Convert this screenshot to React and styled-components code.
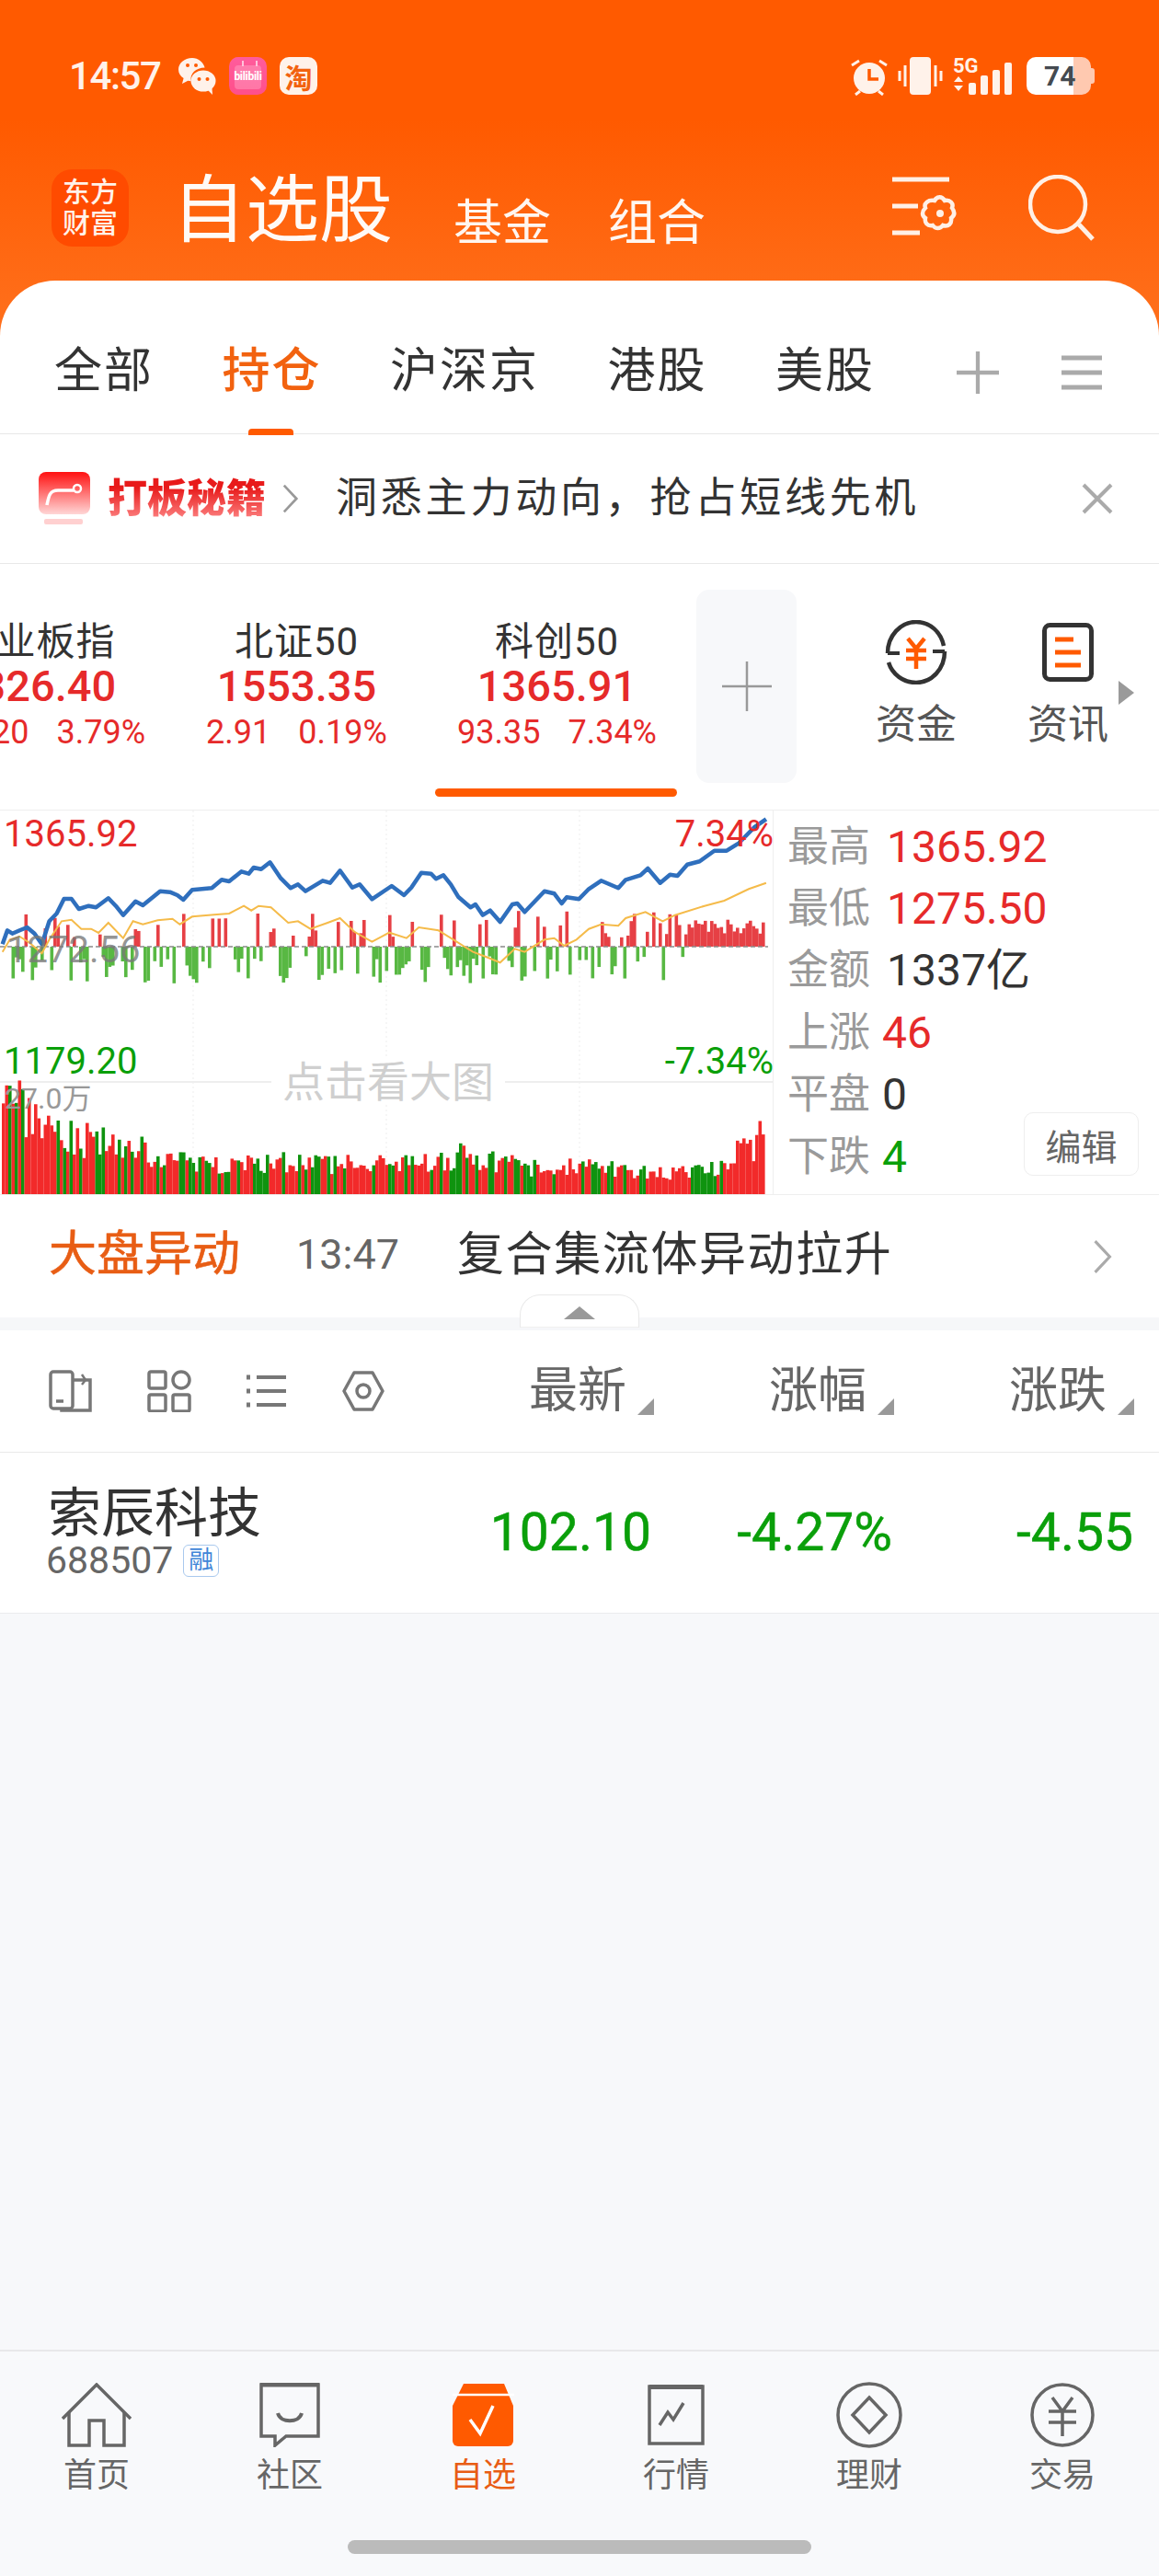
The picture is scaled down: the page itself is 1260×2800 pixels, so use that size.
import React from 'react';
import styled, { createGlobalStyle } from 'styled-components';

const GlobalStyle = createGlobalStyle`
    html, body {
        margin: 0;
        padding: 0;
        background: #f8f9fb;
    }
    body {
        font-family: Roboto, "Noto Sans CJK SC", sans-serif;
    }
    * { box-sizing: border-box; }
`;

const RED = '#e62a2a';
const GREEN = '#0a9f0a';
const ORANGE = '#ff5a00';

const Page = styled.div`
    width: 1260px;
    height: 2800px;
    display: flex;
    flex-direction: column;
    overflow: hidden;
`;

const Header = styled.header`
    background: linear-gradient(180deg, #ff5a00 0, #ff5a00 130px, #ff6e1a 340px);
`;

const StatusBar = styled.div`
    height: 184px;
    padding: 62px 70px 0 75px;
    display: flex;
    align-items: flex-start;
`;

const Clock = styled.span`
    font-size: 42px;
    font-weight: 500;
    letter-spacing: -1.4px;
    line-height: 41px;
    color: #fff2ea;
    width: 117px;
`;

const AppBadge = styled.span`
    position: relative;
    width: 41px;
    height: 41px;
    border-radius: 10px;
    margin-left: 14px;
    display: flex;
    align-items: center;
    justify-content: center;
    font-weight: 700;
    overflow: hidden;
    background: ${p => p.$bg};
    color: ${p => p.$fg};
    font-size: ${p => p.$size}px;
`;

const BiliBadge = styled(AppBadge)`
    letter-spacing: -0.3px;

    &::before {
        content: '';
        position: absolute;
        left: 6px;
        right: 6px;
        top: 9px;
        bottom: 6px;
        border-radius: 4px;
        background: rgba(255, 255, 255, 0.22);
    }
    &::after {
        content: '';
        position: absolute;
        left: 14px;
        top: 4px;
        width: 13px;
        height: 6px;
        border-left: 2px solid #ffc2da;
        border-right: 2px solid #ffc2da;
    }
`;

const StatusRight = styled.div`
    margin-left: auto;
    display: flex;
    align-items: flex-start;
`;

const Battery = styled.span`
    width: 70px;
    height: 41px;
    margin-left: 14px;
    border-radius: 10px;
    font-size: 30px;
    font-weight: 700;
    line-height: 41px;
    color: #444a50;
    padding-left: 19px;
    background: linear-gradient(90deg, #fff 0, #fff 51px, #ffc9b0 51px);
`;

const BatteryCap = styled.span`
    width: 4px;
    height: 17px;
    margin-top: 12px;
    background: #ffc9b0;
    border-radius: 0 3px 3px 0;
`;

const TitleBar = styled.div`
    height: 121px;
    padding: 0 70px 0 56px;
    display: flex;
    align-items: flex-start;
`;

const Logo = styled.div`
    width: 84px;
    height: 84px;
    border-radius: 22px;
    background: #ff4b00;
    color: #fff3ea;
    font-size: 30px;
    font-weight: 500;
    line-height: 34px;
    text-align: center;
    padding-top: 8px;
`;

const MainTitle = styled.h1`
    margin: -5px 0 0 47px;
    font-size: 80px;
    font-weight: 400;
    line-height: 100px;
    color: #fffaf6;
`;

const SubTitle = styled.span`
    margin: 21px 0 0 ${p => p.$gap}px;
    font-size: 53px;
    line-height: 76px;
    color: #fff6f0;
`;

const TitleIcons = styled.div`
    margin-left: auto;
    display: flex;
    align-items: flex-start;
    gap: 76px;
    margin-top: 8px;
`;

const Tabs = styled.nav`
    height: 167px;
    background: #fff;
    border-radius: 60px 60px 0 0;
    border-bottom: 1px solid #e8e8e8;
    padding: 34px 62px 0 59px;
    display: flex;
    align-items: center;
    gap: 74.5px;
`;

const Tab = styled.span`
    position: relative;
    font-size: 52px;
    letter-spacing: 2px;
    line-height: 70px;
    margin-top: -3px;
    color: ${p => (p.$active ? '#f2620f' : '#333')};
    font-weight: ${p => (p.$active ? 500 : 400)};

    &::after {
        content: '';
        display: ${p => (p.$active ? 'block' : 'none')};
        position: absolute;
        left: 28px;
        bottom: -34px;
        width: 49px;
        height: 7px;
        border-radius: 4px 4px 0 0;
        background: ${ORANGE};
    }
`;

const TabTools = styled.div`
    margin-left: auto;
    display: flex;
    gap: 68px;
    align-items: center;
`;

const Banner = styled.div`
    height: 141px;
    background: #fff;
    border-bottom: 1px solid #e8e8e8;
    padding: 0 50px 0 42px;
    display: flex;
    align-items: center;
`;

const PromoName = styled.span`
    margin-left: 19px;
    font-size: 43px;
    font-weight: 900;
    line-height: 60px;
    color: transparent;
    background: linear-gradient(180deg, #e81a1a 30%, #ff8f8f 95%);
    -webkit-background-clip: text;
    background-clip: text;
`;

const PromoText = styled.span`
    margin-left: 40px;
    font-size: 45px;
    letter-spacing: 3.8px;
    line-height: 60px;
    color: #333;
`;

const IndexStrip = styled.section`
    height: 267px;
    background: #fff;
    display: flex;
    overflow: hidden;
`;

const IndexItem = styled.div`
    position: relative;
    flex: 0 0 283px;
    padding-top: 62px;
    text-align: center;
    margin-left: ${p => p.$offset || 0}px;

    &::after {
        content: '';
        display: ${p => (p.$active ? 'block' : 'none')};
        position: absolute;
        left: 9px;
        right: 11px;
        top: 244px;
        height: 9px;
        border-radius: 5px;
        background: ${ORANGE};
    }
`;

const IndexName = styled.div`
    font-size: 42px;
    letter-spacing: 1px;
    line-height: 46px;
    color: #333;
`;

const IndexValue = styled.div`
    font-size: 47px;
    font-weight: 500;
    line-height: 50px;
    color: ${RED};
`;

const IndexChange = styled.div`
    margin-top: 5px;
    display: flex;
    justify-content: center;
    gap: 30px;
    font-size: 36px;
    line-height: 40px;
    color: ${RED};
`;

const AddBox = styled.div`
    flex: 0 0 109px;
    height: 210px;
    margin: 28px 0 0 10px;
    border-radius: 14px;
    background: #f7f8fa;
    display: flex;
    align-items: center;
    justify-content: center;
`;

const Shortcut = styled.div`
    flex: 0 0 ${p => p.$width}px;
    margin-left: ${p => p.$gap}px;
    padding-top: 60px;
    display: flex;
    flex-direction: column;
    align-items: center;
`;

const ShortcutIcon = styled.div`
    height: 71px;
    display: flex;
    align-items: center;
`;

const ShortcutLabel = styled.div`
    margin-top: 19px;
    font-size: 44px;
    line-height: 50px;
    color: #555;
`;

const MoreArrow = styled.div`
    flex: none;
    width: 0;
    height: 0;
    margin: 127px 0 0 9px;
    border-left: 17px solid #9a9a9a;
    border-top: 13px solid transparent;
    border-bottom: 13px solid transparent;
`;

const ChartRow = styled.section`
    height: 419px;
    background: #fff;
    display: flex;
    border-top: 1px solid #eee;
    border-bottom: 1px solid #eee;
`;

const ChartArea = styled.div`
    position: relative;
    width: 841px;
    height: 100%;
    border-right: 1px solid #eee;
`;

const ChartLabel = styled.span`
    position: absolute;
    font-size: ${p => p.$size || 40}px;
    line-height: 44px;
    color: ${p => p.$color};
    top: ${p => p.$top}px;
    left: ${p => (p.$left === undefined ? 'auto' : `${p.$left}px`)};
    right: ${p => (p.$right === undefined ? 'auto' : `${p.$right}px`)};
`;

const BigChartHint = styled.span`
    position: absolute;
    left: 295px;
    top: 270px;
    padding: 0 12px;
    background: #fff;
    font-size: 46px;
    line-height: 50px;
    color: #cfcfcf;
`;

const SidePanel = styled.div`
    position: relative;
    flex: 1;
    padding: 6px 0 0 15px;
`;

const StatRow = styled.div`
    height: 67.4px;
    display: flex;
    align-items: center;
`;

const StatLabel = styled.span`
    width: ${p => (p.$tight ? 103 : 108)}px;
    font-size: 45px;
    color: #9a9a9a;
    line-height: 60px;
`;

const StatValue = styled.span`
    font-size: 48px;
    line-height: 60px;
    color: ${p => p.$color};
`;

const EditButton = styled.button`
    position: absolute;
    right: 22px;
    bottom: 20px;
    width: 125px;
    height: 69px;
    background: #fff;
    border: 1px solid #eee;
    border-radius: 10px;
    font-family: inherit;
    font-size: 39px;
    color: #666;
    padding: 0;
`;

const AlertRow = styled.div`
    height: 133px;
    background: #fff;
    padding: 0 50px 0 53px;
    display: flex;
    align-items: center;
`;

const AlertTag = styled.span`
    width: 269px;
    font-size: 52px;
    line-height: 64px;
    margin-top: -3px;
    color: #e85d14;
    -webkit-text-stroke: 0.6px #e85d14;
`;

const AlertTime = styled.span`
    width: 175px;
    font-size: 45px;
    line-height: 64px;
    margin-top: -3px;
    color: #666;
`;

const AlertText = styled.span`
    font-size: 51px;
    letter-spacing: 1.6px;
    line-height: 64px;
    margin-top: -3px;
    color: #333;
`;

const Divider = styled.div`
    position: relative;
    height: 14px;
    background: #f6f7f9;
`;

const CollapseHandle = styled.div`
    position: absolute;
    left: 565px;
    top: -25px;
    width: 130px;
    height: 36px;
    background: #fff;
    border: 1px solid #e9e9e9;
    border-bottom: 1px solid #f0f0f0;
    border-radius: 22px 22px 0 0;
    display: flex;
    justify-content: center;
    padding-top: 12px;

    &::before {
        content: '';
        width: 0;
        height: 0;
        border-left: 17px solid transparent;
        border-right: 17px solid transparent;
        border-bottom: 14px solid #999;
    }
`;

const ListHead = styled.div`
    height: 133px;
    background: #fff;
    border-bottom: 1px solid #e9e9e9;
    padding-left: 53px;
    display: flex;
    align-items: center;
`;

const ViewIcons = styled.div`
    flex: 0 0 522px;
    display: flex;
    gap: 59px;
`;

const HeadCell = styled.div`
    flex: 0 0 ${p => p.$width || 261}px;
    display: flex;
    align-items: flex-end;
    font-size: 53px;
    line-height: 66px;
    color: #666;
`;

const SortMark = styled.span`
    width: 0;
    height: 0;
    margin: 0 0 7px 12px;
    border-left: 18px solid transparent;
    border-bottom: 18px solid #999;
`;

const StockRow = styled.div`
    height: 175px;
    background: #fff;
    border-bottom: 1px solid #eaebee;
    padding-right: 28px;
    display: flex;
    align-items: center;
`;

const StockInfo = styled.div`
    flex: 1;
    padding: 0 0 0 52px;
`;

const StockName = styled.div`
    font-size: 58px;
    line-height: 60px;
    margin-top: -3px;
    color: #333;
`;

const StockCode = styled.div`
    margin: 3px 0 0 -2px;
    display: flex;
    align-items: center;
    font-size: 41px;
    line-height: 36px;
    color: #666;
`;

const MarginTag = styled.span`
    margin-left: 11px;
    width: 39px;
    height: 35px;
    border: 1px solid #a9c9ee;
    border-radius: 6px;
    font-size: 27px;
    line-height: 33px;
    text-align: center;
    color: #3f86d8;
`;

const Quote = styled.div`
    width: 262px;
    text-align: right;
    font-size: 57px;
    line-height: 70px;
    color: ${GREEN};
    -webkit-text-stroke: 0.5px ${GREEN};
`;

const EmptyArea = styled.div`
    flex: 1;
    background: #f7f8fa;
`;

const BottomBar = styled.footer`
    height: 246px;
    background: #f8f9fb;
    border-top: 2px solid #e8e8ea;
`;

const BottomTabs = styled.div`
    height: 205px;
    padding-top: 30px;
    display: flex;
`;

const BottomTab = styled.div`
    flex: 1;
    display: flex;
    flex-direction: column;
    align-items: center;
    font-size: 36px;
    color: ${p => (p.$active ? '#e85d14' : '#666')};
`;

const BottomIcon = styled.div`
    height: 78px;
    display: flex;
    align-items: center;
    justify-content: center;
`;

const BottomLabel = styled.span`
    margin-top: 5px;
    line-height: 44px;
`;

const HomeHandle = styled.div`
    width: 504px;
    height: 15px;
    margin: 0 auto;
    border-radius: 8px;
    background: #bbb;
`;

// trace of the price line, in crop coordinates (x / 1.867, y / 3)
const BLUE = [[5,445],[15,400],[25,410],[40,400],[55,390],[70,410],[85,445],[100,370],[115,345],[130,297],[145,297],[160,330],[180,320],[195,325],[220,295],[235,320],[250,350],[275,305],[290,318],[325,272],[345,275],[360,285],[372,300],[390,268],[430,262],[450,235],[465,240],[490,208],[505,215],[515,195],[530,200],[548,178],[570,230],[590,262],[605,250],[620,272],[655,238],[670,245],[690,205],[715,260],[730,250],[755,298],[795,255],[820,285],[835,260],[855,212],[875,215],[885,232],[900,220],[915,250],[930,290],[955,325],[965,315],[980,350],[995,335],[1015,372],[1040,315],[1050,312],[1065,340],[1105,272],[1125,280],[1140,312],[1150,292],[1175,298],[1195,265],[1220,238],[1255,262],[1270,235],[1300,220],[1315,198],[1340,245],[1360,218],[1375,222],[1395,185],[1420,175],[1450,140],[1475,140],[1500,115],[1530,65],[1555,37]];
const YELLOW = [[5,470],[20,430],[40,420],[60,440],[85,475],[100,430],[125,370],[145,365],[165,395],[185,395],[200,408],[220,375],[250,425],[270,370],[290,380],[320,367],[350,362],[365,380],[390,355],[440,348],[465,345],[495,320],[510,335],[525,320],[550,325],[585,375],[605,370],[630,395],[665,375],[690,360],[720,405],[755,437],[790,407],[825,425],[850,390],[890,400],[915,425],[960,470],[985,485],[1015,505],[1045,460],[1065,470],[1105,430],[1125,425],[1145,450],[1170,430],[1195,395],[1220,380],[1255,385],[1270,360],[1310,340],[1345,370],[1370,350],[1430,320],[1470,303],[1520,265],[1555,245]];
const VOLUME_TOP = [[0,121],[16,120],[50,85],[110,66],[190,62],[260,54],[340,42],[440,32],[560,36],[700,34],[800,32],[950,44],[1100,28],[1200,33],[1350,22],[1450,32],[1530,56],[1556,74],[1568,30]];

const toPoints = line => line.map(([x, y]) => `${(x / 1.867).toFixed(1)},${(y / 3 - 3).toFixed(1)}`).join(' ');

let seed = 7;
const rnd = () => {
    seed = (seed * 16807) % 2147483647;
    return seed / 2147483647;
};

const volumeAt = x => {
    for (let i = 1; i < VOLUME_TOP.length; i++) {
        if (x <= VOLUME_TOP[i][0]) {
            const [x0, y0] = VOLUME_TOP[i - 1];
            const [x1, y1] = VOLUME_TOP[i];
            return y0 + ((y1 - y0) * (x - x0)) / (x1 - x0);
        }
    }
    return 20;
};

const flowBars = [];
const volumeBars = [];
for (let i = 0; i < 237; i++) {
    const x = 2 + i * 3.5;
    const zoomX = x * 1.867;
    const late = x > 745;
    const mid = x > 480 && x < 540;
    const upChance = late ? 0.97 : mid ? 0.15 : x > 680 ? 0.7 : 0.48;
    const show = late || mid || rnd() > 0.35;
    const up = rnd() < upChance;
    if (show) {
        const h = late ? 14 + rnd() * 16 : 10 + rnd() * 30;
        flowBars.push({ x, h, up });
    }
    const base = volumeAt(zoomX);
    const volUp = x > 785 || x < 8 ? true : rnd() < 0.66;
    volumeBars.push({ x, h: base * (0.62 + rnd() * 0.68), up: volUp });
}

const Chart = () => (
    <svg width="840" height="417" viewBox="0 0 840 417">
        {[210, 420, 630].map(x => (
            <line key={x} x1={x} x2={x} y1="0" y2="417" stroke="#f4f4f4" strokeWidth="1.5" strokeDasharray="2 3" />
        ))}
        <line x1="0" x2="840" y1="295" y2="295" stroke="#eee" strokeWidth="2" />
        {flowBars.map(b => (
            <rect key={b.x} x={b.x} y={b.up ? 148 - b.h : 148} width="3.6" height={b.h} fill={b.up ? '#e64045' : '#58b843'} />
        ))}
        <line x1="0" x2="835" y1="148" y2="148" stroke="#8a8a8a" strokeWidth="1.5" strokeDasharray="5 3" />
        <polyline points={toPoints(YELLOW)} fill="none" stroke="#f5bb4a" strokeWidth="2" />
        <polyline points={toPoints(BLUE)} fill="none" stroke="#2f6fbd" strokeWidth="4.5" strokeLinejoin="round" />
        {volumeBars.map(b => (
            <rect key={b.x} x={b.x} y={417 - b.h} width="3.6" height={b.h} fill={b.up ? '#f22a2a' : '#0f930f'} />
        ))}
    </svg>
);

const WeChatIcon = () => (
    <svg width="42" height="42" viewBox="0 0 42 42" style={{ marginLeft: 1 }}>
        <path d="M16 1C7.5 1 1 6.6 1 13.5c0 4 2.2 7.4 5.6 9.6L5 29l6.3-3.2c1.2.3 2.2.5 3.4.5C13 18 20 11.5 29.6 11.5 27.8 5.4 22.5 1 16 1z" fill="#fff2ea" />
        <ellipse cx="28" cy="26" rx="13.5" ry="11.5" fill="#fff2ea" />
        <path d="M33 36l5 5-.5-7z" fill="#fff2ea" />
        <circle cx="11" cy="9" r="2" fill={ORANGE} />
        <circle cx="20" cy="9" r="2" fill={ORANGE} />
        <circle cx="23.5" cy="24" r="2" fill={ORANGE} />
        <circle cx="32.5" cy="24" r="2" fill={ORANGE} />
    </svg>
);

const AlarmIcon = () => (
    <svg width="42" height="42" viewBox="0 0 42 42">
        <circle cx="21" cy="23" r="17" fill="#fff2ea" />
        <path d="M21 13v11h10" fill="none" stroke={ORANGE} strokeWidth="3.5" />
        <path d="M2 9l8-5M40 9l-8-5M6 41l5-4M36 41l-5-4" stroke="#fff2ea" strokeWidth="3" />
    </svg>
);

const VibrateIcon = () => (
    <svg width="50" height="42" viewBox="0 0 50 42" style={{ marginLeft: 10 }}>
        <rect x="13" y="0" width="23" height="41" rx="4" fill="#fff2ea" />
        <path d="M2 15v11M8 9v23M41 9v23M47 15v11" stroke="#fff2ea" strokeWidth="3" />
    </svg>
);

const SignalIcon = () => (
    <svg width="66" height="42" viewBox="0 0 66 42" style={{ marginLeft: 10 }}>
        <text x="0" y="17" fontSize="22" fontWeight="700" fontFamily="Roboto" fill="#fff2ea">5G</text>
        <path d="M1 27l5-6 5 6zM1 31l5 6 5-6z" fill="#fff2ea" />
        <rect x="17" y="28" width="8" height="13" rx="2" fill="#fff2ea" />
        <rect x="30" y="20" width="8" height="21" rx="2" fill="#fff2ea" />
        <rect x="43" y="14" width="8" height="27" rx="2" fill="#fff2ea" />
        <rect x="56" y="6" width="8" height="35" rx="2" fill="#fff2ea" />
    </svg>
);

const FilterIcon = () => (
    <svg width="72" height="66" viewBox="0 0 72 66">
        <g stroke="#fff0e6" strokeWidth="5" fill="none">
            <path d="M0 3h62M0 32h28M0 61h30" />
            <path d="M46 26c3-5 8-5 11 0 6-1 10 3 8 8 3 4 3 8-1 11 1 6-3 10-9 8-3 4-8 4-11 0-6 1-9-3-8-8-4-3-4-7 0-11-2-5 3-9 10-8z" strokeWidth="4.5" />
        </g>
        <circle cx="52" cy="40" r="4" fill="#fff0e6" />
    </svg>
);

const SearchIcon = () => (
    <svg width="72" height="72" viewBox="0 0 72 72" style={{ marginTop: -2 }}>
        <circle cx="32" cy="32" r="30" fill="none" stroke="#fff0e6" strokeWidth="4.5" />
        <path d="M55 54l15 16" stroke="#fff0e6" strokeWidth="5" />
    </svg>
);

const PromoIcon = () => (
    <svg width="56" height="58" viewBox="0 0 56 58">
        <defs>
            <linearGradient id="promo" x1="0" y1="0" x2="0" y2="1">
                <stop offset="0" stopColor="#f11" />
                <stop offset="1" stopColor="#ffd6d6" />
            </linearGradient>
        </defs>
        <rect x="0" y="0" width="56" height="46" rx="8" fill="url(#promo)" />
        <rect x="6" y="51" width="42" height="6" rx="2" fill="#ffd0d0" />
        <path d="M9 36c2-10 3-16 12-16h17" fill="none" stroke="#fff" strokeWidth="3.5" />
        <circle cx="42" cy="18" r="4" fill="none" stroke="#fff" strokeWidth="2.5" />
    </svg>
);

const FundIcon = () => (
    <svg width="68" height="70" viewBox="0 0 68 70" fill="none">
        <path d="M3 36C3 17 17 2 34 2c15 0 27 11 30 26M65 34c0 19-14 34-31 34-14 0-26-9-30-22" stroke="#333" strokeWidth="4.5" />
        <path d="M3 36h13M65 34H52" stroke="#333" strokeWidth="4" />
        <path d="M25 20l9 11 9-11M23 33h22M23 42h22M34 31v22" stroke={ORANGE} strokeWidth="4.5" />
    </svg>
);

const NewsIcon = () => (
    <svg width="56" height="64" viewBox="0 0 56 64">
        <rect x="2.5" y="2.5" width="51" height="59" rx="6" fill="none" stroke="#333" strokeWidth="5" />
        <path d="M14 18h20M14 32h28M14 46h28" stroke={ORANGE} strokeWidth="5" />
    </svg>
);

const ViewIconOne = () => (
    <svg width="48" height="46" viewBox="0 0 48 46" fill="none" stroke="#777" strokeWidth="3.5">
        <rect x="2" y="2" width="24" height="40" rx="3" />
        <path d="M26 11h19v33H14v-2M8 34h8" />
        <path d="M36 5l4 6-4 5" strokeWidth="2.5" />
    </svg>
);

const ViewIconTwo = () => (
    <svg width="48" height="46" viewBox="0 0 48 46" fill="none" stroke="#777" strokeWidth="3.5">
        <rect x="2" y="2" width="18" height="18" rx="2" />
        <rect x="28" y="2" width="18" height="18" rx="9" />
        <rect x="2" y="27" width="18" height="18" rx="2" />
        <rect x="28" y="27" width="18" height="18" rx="2" />
    </svg>
);

const ViewIconThree = () => (
    <svg width="46" height="46" viewBox="0 0 46 46" stroke="#777" strokeWidth="4">
        <path d="M12 8h32M12 23h32M12 38h32" />
        <path d="M1 8h4M1 23h4M1 38h4" strokeWidth="5" />
    </svg>
);

const ViewIconFour = () => (
    <svg width="46" height="46" viewBox="0 0 46 46" fill="none" stroke="#777" strokeWidth="3.5">
        <path d="M13 3h20l11 20-11 20H13L2 23z" strokeLinejoin="round" />
        <circle cx="23" cy="23" r="7" />
    </svg>
);

const bottomIcons = {
    home: (
        <svg width="76" height="70" viewBox="0 0 76 70" fill="none" stroke="#666" strokeWidth="3.5">
            <path d="M1 39L38 2l37 37" />
            <path d="M8 32v36h22V41h16v27h22V32" />
        </svg>
    ),
    community: (
        <svg width="66" height="70" viewBox="0 0 66 70" fill="none" stroke="#666" strokeWidth="3.5">
            <path d="M2 2h62v56H29l-12 10v-10H2z" />
            <path d="M1 2h64" strokeWidth="5" />
            <path d="M20 33c3 11 23 11 26 0" strokeWidth="4" />
        </svg>
    ),
    watch: (
        <svg width="67" height="70" viewBox="0 0 67 70">
            <path d="M12 1h44l10 24v38a6 6 0 0 1-6 6H6a6 6 0 0 1-6-6V25z" fill={ORANGE} />
            <path d="M0 13h67" stroke="#fff" strokeWidth="2.5" />
            <path d="M19 40l11 15 14-30" fill="none" stroke="#fff" strokeWidth="3.5" />
        </svg>
    ),
    market: (
        <svg width="62" height="66" viewBox="0 0 62 66" fill="none" stroke="#666" strokeWidth="3.5">
            <rect x="2" y="2" width="58" height="62" />
            <path d="M2 2h58" strokeWidth="6" />
            <path d="M13 44l9-14 6 8 11-18" />
        </svg>
    ),
    wealth: (
        <svg width="72" height="74" viewBox="0 0 72 74" fill="none" stroke="#666" strokeWidth="3.5">
            <circle cx="36" cy="37" r="34" />
            <path d="M36 18l18 19-18 19-18-19z" />
        </svg>
    ),
    trade: (
        <svg width="70" height="72" viewBox="0 0 70 72" fill="none" stroke="#666" strokeWidth="3.5">
            <circle cx="35" cy="36" r="33" />
            <path d="M24 17l11 15 11-15M20 32h30M20 44h30M35 32v27" />
        </svg>
    ),
};

const Plus = ({ size, color, stroke }) => (
    <svg width={size} height={size} viewBox="0 0 54 54">
        <path d="M0 27h54M27 0v54" stroke={color} strokeWidth={stroke} />
    </svg>
);

const Chevron = ({ width, height, color }) => (
    <svg width={width} height={height} viewBox="0 0 20 36" fill="none" stroke={color} strokeWidth="3">
        <path d="M2 2l15 16L2 34" />
    </svg>
);

const tabs = ['全部', '持仓', '沪深京', '港股', '美股'];

const indexes = [
    { name: '创业板指', value: '3326.40', change: '120.20', pct: '3.79%', offset: -102 },
    { name: '北证50', value: '1553.35', change: '2.91', pct: '0.19%' },
    { name: '科创50', value: '1365.91', change: '93.35', pct: '7.34%', active: true },
];

const stats = [
    { label: '最高', value: '1365.92', color: RED },
    { label: '最低', value: '1275.50', color: RED },
    { label: '金额', value: '1337亿', color: '#333' },
    { label: '上涨', value: '46', color: RED, tight: true },
    { label: '平盘', value: '0', color: '#333', tight: true },
    { label: '下跌', value: '4', color: GREEN, tight: true },
];

const bottomTabs = [
    { key: 'home', label: '首页' },
    { key: 'community', label: '社区' },
    { key: 'watch', label: '自选', active: true },
    { key: 'market', label: '行情' },
    { key: 'wealth', label: '理财' },
    { key: 'trade', label: '交易' },
];

const App = () => {
    return (
        <Page>
            <GlobalStyle />
            <Header>
                <StatusBar>
                    <Clock>14:57</Clock>
                    <WeChatIcon />
                    <BiliBadge $bg="linear-gradient(180deg,#ff5c9c,#ff4f8b)" $fg="#fff" $size={12}>bilibili</BiliBadge>
                    <AppBadge $bg="#fff2ea" $fg="#f2620f" $size={30}>淘</AppBadge>
                    <StatusRight>
                        <AlarmIcon />
                        <VibrateIcon />
                        <SignalIcon />
                        <Battery>74</Battery>
                        <BatteryCap />
                    </StatusRight>
                </StatusBar>
                <TitleBar>
                    <Logo>东方<br />财富</Logo>
                    <MainTitle>自选股</MainTitle>
                    <SubTitle $gap={66}>基金</SubTitle>
                    <SubTitle $gap={62}>组合</SubTitle>
                    <TitleIcons>
                        <FilterIcon />
                        <SearchIcon />
                    </TitleIcons>
                </TitleBar>
                <Tabs>
                    {tabs.map(tab => (
                        <Tab key={tab} $active={tab === '持仓'}>{tab}</Tab>
                    ))}
                    <TabTools>
                        <Plus size={46} color="#aaa" stroke="5" />
                        <svg width="44" height="40" viewBox="0 0 44 40">
                            <path d="M0 4h44M0 20h44M0 36h44" stroke="#aaa" strokeWidth="5" />
                        </svg>
                    </TabTools>
                </Tabs>
            </Header>

            <Banner>
                <PromoIcon />
                <PromoName>打板秘籍</PromoName>
                <span style={{ marginLeft: 18, display: 'flex' }}>
                    <Chevron width={18} height={34} color="#999" />
                </span>
                <PromoText>洞悉主力动向，抢占短线先机</PromoText>
                <svg width="34" height="34" viewBox="0 0 34 34" style={{ marginLeft: 'auto' }}>
                    <path d="M2 2l30 30M32 2L2 32" stroke="#aaa" strokeWidth="4" />
                </svg>
            </Banner>

            <IndexStrip>
                {indexes.map(item => (
                    <IndexItem key={item.name} $active={item.active} $offset={item.offset}>
                        <IndexName>{item.name}</IndexName>
                        <IndexValue>{item.value}</IndexValue>
                        <IndexChange>
                            <span>{item.change}</span>
                            <span>{item.pct}</span>
                        </IndexChange>
                    </IndexItem>
                ))}
                <AddBox>
                    <Plus size={54} color="#999" stroke="2.5" />
                </AddBox>
                <Shortcut $width={92} $gap={84}>
                    <ShortcutIcon><FundIcon /></ShortcutIcon>
                    <ShortcutLabel>资金</ShortcutLabel>
                </Shortcut>
                <Shortcut $width={92} $gap={73}>
                    <ShortcutIcon><NewsIcon /></ShortcutIcon>
                    <ShortcutLabel>资讯</ShortcutLabel>
                </Shortcut>
                <MoreArrow />
            </IndexStrip>

            <ChartRow>
                <ChartArea>
                    <Chart />
                    <ChartLabel $color={RED} $top={4} $left={4}>1365.92</ChartLabel>
                    <ChartLabel $color={RED} $top={4} $right={-1}>7.34%</ChartLabel>
                    <ChartLabel $color="rgba(120,120,120,.8)" $top={130} $left={7} $size={40}>1272.56</ChartLabel>
                    <ChartLabel $color={GREEN} $top={251} $left={4}>1179.20</ChartLabel>
                    <ChartLabel $color={GREEN} $top={251} $right={-1}>-7.34%</ChartLabel>
                    <ChartLabel $color="#999" $top={291} $left={5} $size={32}>27.0万</ChartLabel>
                    <BigChartHint>点击看大图</BigChartHint>
                </ChartArea>
                <SidePanel>
                    {stats.map(s => (
                        <StatRow key={s.label}>
                            <StatLabel $tight={s.tight}>{s.label}</StatLabel>
                            <StatValue $color={s.color}>{s.value}</StatValue>
                        </StatRow>
                    ))}
                    <EditButton>编辑</EditButton>
                </SidePanel>
            </ChartRow>

            <AlertRow>
                <AlertTag>大盘异动</AlertTag>
                <AlertTime>13:47</AlertTime>
                <AlertText>复合集流体异动拉升</AlertText>
                <span style={{ marginLeft: 'auto', display: 'flex' }}>
                    <Chevron width={22} height={38} color="#aaa" />
                </span>
            </AlertRow>
            <Divider>
                <CollapseHandle />
            </Divider>

            <ListHead>
                <ViewIcons>
                    <ViewIconOne />
                    <ViewIconTwo />
                    <ViewIconThree />
                    <ViewIconFour />
                </ViewIcons>
                <HeadCell>最新<SortMark /></HeadCell>
                <HeadCell>涨幅<SortMark /></HeadCell>
                <HeadCell $width={160}>涨跌<SortMark /></HeadCell>
            </ListHead>

            <StockRow>
                <StockInfo>
                    <StockName>索辰科技</StockName>
                    <StockCode>688507<MarginTag>融</MarginTag></StockCode>
                </StockInfo>
                <Quote>102.10</Quote>
                <Quote>-4.27%</Quote>
                <Quote>-4.55</Quote>
            </StockRow>

            <EmptyArea />

            <BottomBar>
                <BottomTabs>
                    {bottomTabs.map(t => (
                        <BottomTab key={t.key} $active={t.active}>
                            <BottomIcon>{bottomIcons[t.key]}</BottomIcon>
                            <BottomLabel>{t.label}</BottomLabel>
                        </BottomTab>
                    ))}
                </BottomTabs>
                <HomeHandle />
            </BottomBar>
        </Page>
    );
};

export default App;
